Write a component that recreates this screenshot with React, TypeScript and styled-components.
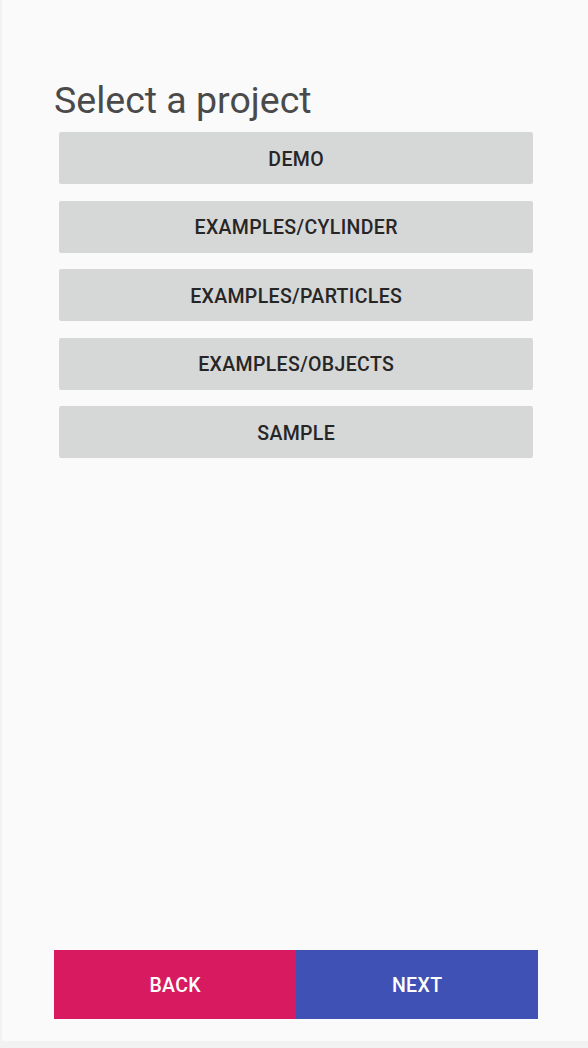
import React from "react";
import styled, { createGlobalStyle } from "styled-components";

const GlobalStyle = createGlobalStyle`
  html, body {
    margin: 0;
    padding: 0;
    background: #f2f2f2;
    font-family: Roboto, "Noto Sans", "Liberation Sans", sans-serif;
  }
  * { box-sizing: border-box; }
`;

const Screen = styled.div`
  margin-left: 2px;
  height: 1041px;
  background: #fafafa;
  display: flex;
  flex-direction: column;
  padding: 82px 50px 22px 52px;
`;

const Title = styled.h1`
  margin: 0;
  font-size: 37.5px;
  line-height: 37.5px;
  font-weight: 400;
  color: #4a4a4a;
  letter-spacing: 0;
`;

const ProjectList = styled.div`
  display: flex;
  flex-direction: column;
  gap: 16.5px;
  padding: 0 5px;
  margin-top: 12.5px;
`;

const ProjectButton = styled.button`
  height: 52px;
  border: none;
  border-radius: 2px;
  background: #d6d7d7;
  color: #262626;
  font-family: Roboto, "Noto Sans", "Liberation Sans", sans-serif;
  font-size: 19.5px;
  font-weight: 500;
  text-transform: uppercase;
  letter-spacing: 0.35px;
  text-indent: 0.35px;
  padding: 2px 0 0;
  cursor: pointer;
`;

const Spacer = styled.div`
  flex: 1;
`;

const Footer = styled.div`
  display: grid;
  grid-template-columns: 1fr 1fr;
  height: 69px;
`;

const NavButton = styled.button<{ $tone: "back" | "next" }>`
  border: none;
  border-radius: 0;
  background: ${(p) => (p.$tone === "back" ? "#d81b60" : "#3f51b5")};
  color: #ffffff;
  font-family: Roboto, "Noto Sans", "Liberation Sans", sans-serif;
  font-size: 19.5px;
  font-weight: 500;
  letter-spacing: 0.35px;
  text-indent: 0.35px;
  text-transform: uppercase;
  cursor: pointer;
  padding: 2px 0 0;
`;

const projects = [
  "demo",
  "examples/cylinder",
  "examples/particles",
  "examples/objects",
  "sample",
];

export default function App() {
  return (
    <>
      <GlobalStyle />
      <Screen>
        <Title>Select a project</Title>
        <ProjectList>
          {projects.map((p) => (
            <ProjectButton key={p}>{p}</ProjectButton>
          ))}
        </ProjectList>
        <Spacer />
        <Footer>
          <NavButton $tone="back">Back</NavButton>
          <NavButton $tone="next">Next</NavButton>
        </Footer>
      </Screen>
    </>
  );
}
